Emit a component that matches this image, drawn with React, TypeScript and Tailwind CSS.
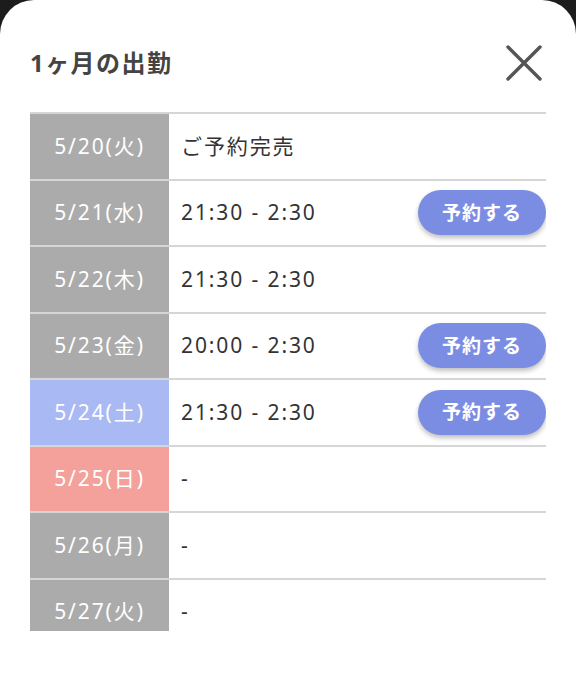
type Day = {
  date: string
  kind: 'normal' | 'sat' | 'sun'
  time: string
  bookable: boolean
}

const days: Day[] = [
  { date: '5/20(火)', kind: 'normal', time: 'ご予約完売', bookable: false },
  { date: '5/21(水)', kind: 'normal', time: '21:30 - 2:30', bookable: true },
  { date: '5/22(木)', kind: 'normal', time: '21:30 - 2:30', bookable: false },
  { date: '5/23(金)', kind: 'normal', time: '20:00 - 2:30', bookable: true },
  { date: '5/24(土)', kind: 'sat', time: '21:30 - 2:30', bookable: true },
  { date: '5/25(日)', kind: 'sun', time: '-', bookable: false },
  { date: '5/26(月)', kind: 'normal', time: '-', bookable: false },
  { date: '5/27(火)', kind: 'normal', time: '-', bookable: false },
]

const dateBg = {
  normal: 'bg-[#ababab]',
  sat: 'bg-[#a9b9f3]',
  sun: 'bg-[#f4a19b]',
}

export default function App() {
  return (
    <div
      className="h-[673px] w-[576px] overflow-hidden bg-[#1c1c1c]"
      style={{ fontFamily: '"Noto Sans", "Noto Sans CJK JP", sans-serif' }}
    >
      <div className="h-full rounded-t-[34px] bg-white px-[30px]">
        <div className="flex h-[112px] items-center justify-between pt-[14px]">
          <h2 className="text-[24px] font-bold tracking-[0.06em] text-[#444]">1ヶ月の出勤</h2>
          <button className="mr-[4px] text-[#555]">
            <svg width="36" height="36" viewBox="0 0 36 36" fill="none" stroke="currentColor" strokeWidth="3.4" strokeLinecap="round">
              <path d="M2 2 L34 34 M34 2 L2 34" />
            </svg>
          </button>
        </div>

        <div className="h-[519px] overflow-hidden">
          {days.map(d => (
            <div key={d.date} className="flex h-[66.5px] border-t-2 border-[#d6d6d6]">
              <div
                className={`flex w-[139px] shrink-0 items-center justify-center text-[21px] tracking-[0.09em] text-white ${dateBg[d.kind]}`}
              >
                {d.date}
              </div>
              <div className="flex flex-1 items-center justify-between pl-[12px]">
                <span className="text-[21px] tracking-[0.09em] text-[#333]">{d.time}</span>
                {d.bookable && (
                  <button className="flex h-[45px] w-[128px] items-center justify-center rounded-full bg-[#7b8de2] text-[19px] font-bold tracking-[0.05em] text-white shadow-[0_3px_5px_rgba(0,0,0,0.25)]">
                    予約する
                  </button>
                )}
              </div>
            </div>
          ))}
        </div>
      </div>
    </div>
  )
}
